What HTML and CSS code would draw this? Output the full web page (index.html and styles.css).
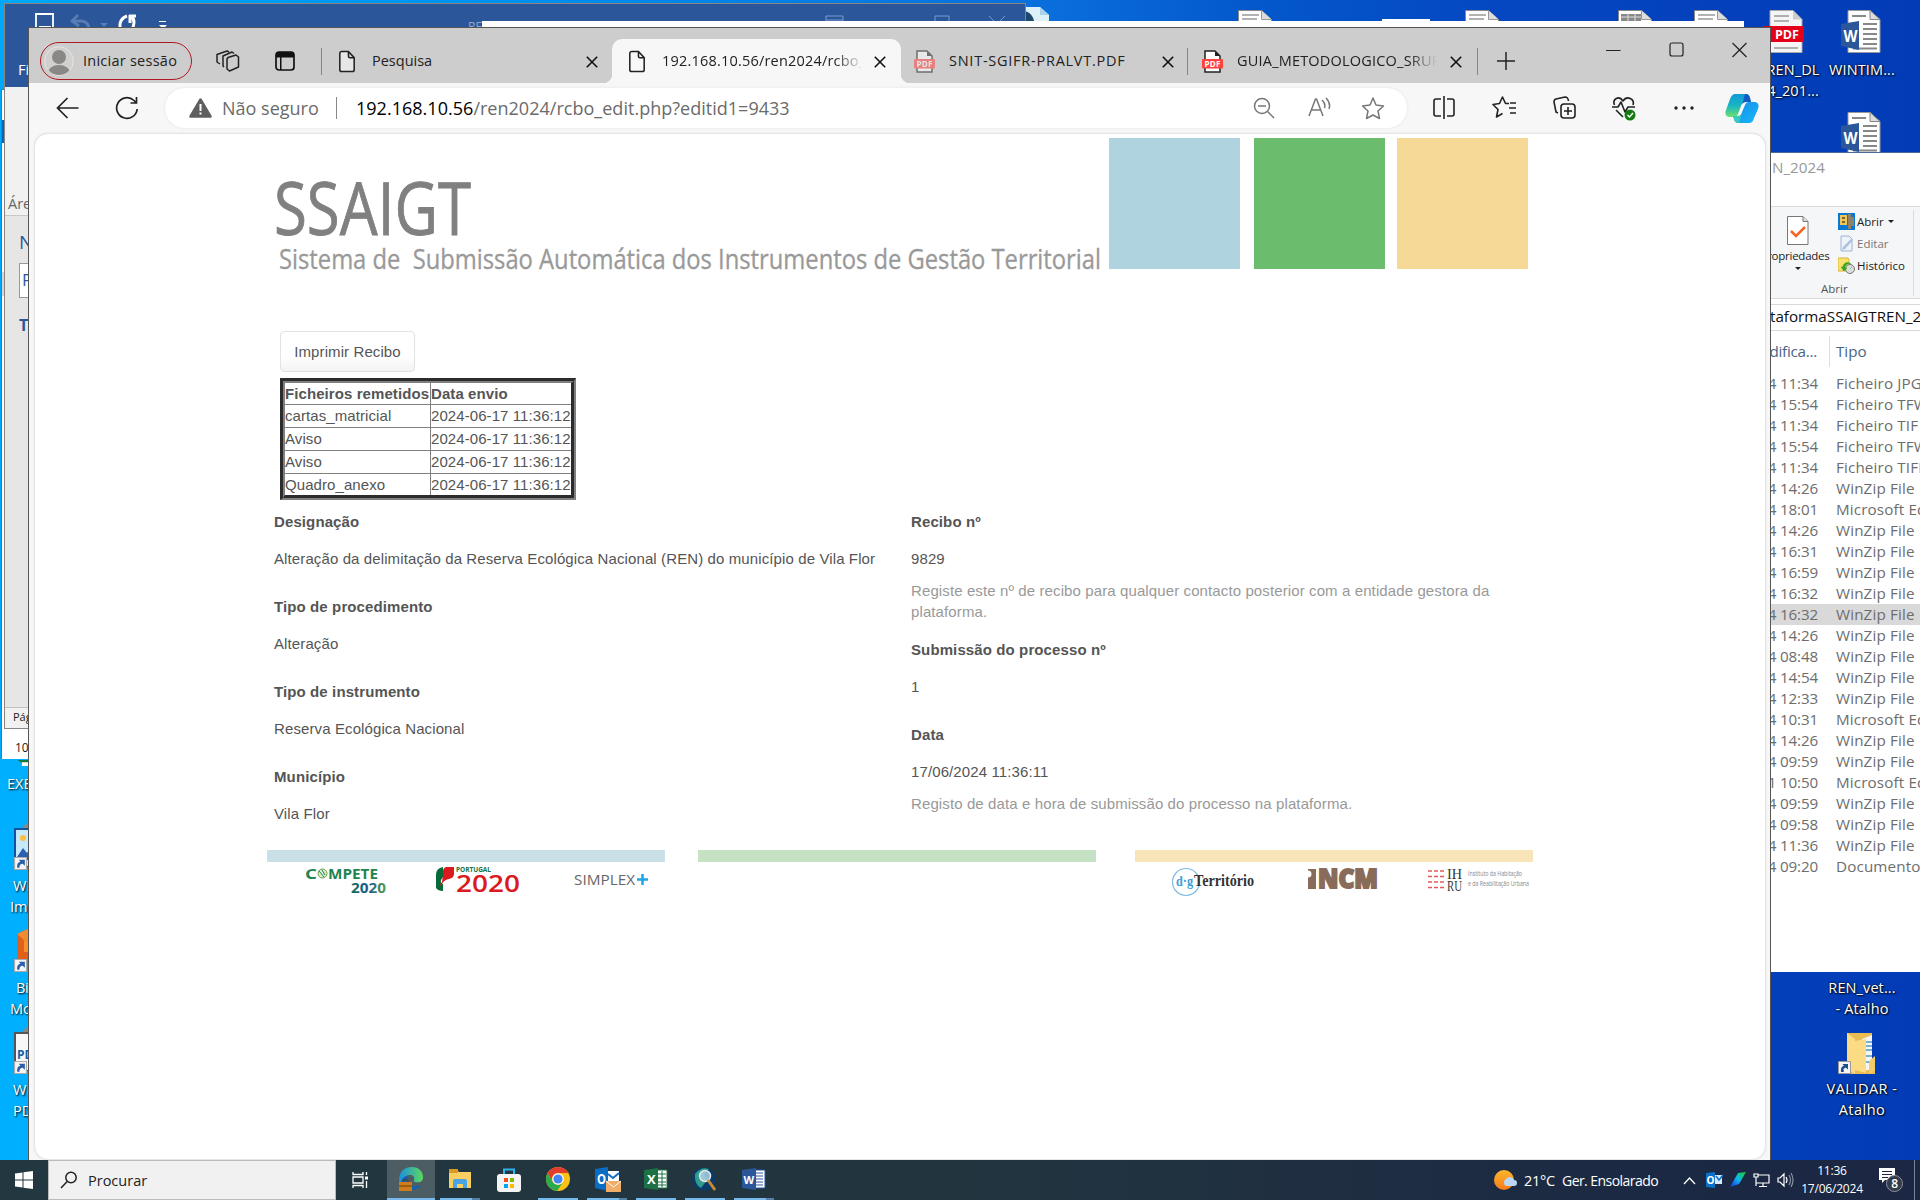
FILE: index.html
```html
<!DOCTYPE html>
<html lang="pt">
<head>
<meta charset="utf-8">
<title>SSAIGT</title>
<link rel="stylesheet" href="styles.css">
</head>
<body>
<svg width="0" height="0" class="defs">
  <symbol id="page" viewBox="0 0 18 24"><path d="M3 1.500h7.500l6 6.500v12.500a2 2 0 0 1-2 2H3.500a2 2 0 0 1-2-2V3.500a2 2 0 0 1 2-2zM10.500 1.800v4.700a1.500 1.500 0 0 0 1.500 1.500h4.500" fill="#f9f9f9" fill-opacity=".6" stroke="#222" stroke-width="1.600"/></symbol>
  <symbol id="close" viewBox="0 0 12 12"><path d="M.8.8l10.400 10.400M11.200.8L.8 11.200" stroke="#111" stroke-width="1.600" fill="none"/></symbol>
  <symbol id="pdf" viewBox="0 0 21 23"><path d="M3 1h10l5 5v16H3z" fill="#fff" stroke="#222" stroke-width="1.500"/><path d="M13 1v5h5z" fill="#222"/><rect y="9" width="21" height="9.500" rx="1" fill="#ff4240"/><text x="2.500" y="16.600" font-size="8" font-weight="700" textLength="16" fill="#fff">PDF</text></symbol>
  <symbol id="worddoc" viewBox="0 0 40 43"><path d="M7 .5h22l10 9v33H7z" fill="#fff" stroke="#999"/><path d="M29 .5v9h10z" fill="#ddd" stroke="#888"/><path d="M11 6h14M22 14h14M22 19h14M22 24h14M22 29h14M22 34h14M12 38.500h24" stroke="#888" stroke-width="2"/><path d="M0 14l18-3v29L0 36z" fill="#2b579a"/><text x="2.500" y="31.500" font-size="16" font-weight="700" fill="#fff" textLength="14" lengthAdjust="spacingAndGlyphs">W</text></symbol>
  <symbol id="doctop" viewBox="0 0 34 11"><path d="M.5 14V.5h23l10 9V14" fill="#fff" stroke="#888"/><path d="M23.500.5v9h10" fill="#ddd" stroke="#999"/><path d="M4 5h17M4 9h15" stroke="#999" stroke-width="1.500"/></symbol>
  <symbol id="link" viewBox="0 0 12 12"><path d="M.5.5h11v11H.5z" fill="#f4f4f4" stroke="#aaa"/><path d="M3 10c-.5-4 1-5.500 3-5.500L4.500 2.500H10V8L8 6.300C6 6.500 5 7.500 5 10z" fill="#2a5fa8"/></symbol>
</svg>

<main class="desktop">
  <div class="topicons">
    <svg class="globe" viewBox="0 0 26 15"><path d="M0 1h16l9 8v6H0z" fill="#dff1f8"/><path d="M0 5c6 1 9 5 10 10H0z" fill="#1b4a6c"/><path d="M16 1v8h9z" fill="#a9d2e8"/></svg>
    <svg class="t1"><use href="#doctop"/></svg><i class="t2"></i>
    <svg class="t3"><use href="#doctop"/></svg>
    <svg class="t4" viewBox="0 0 34 11"><path d="M.5 14V.5h23l10 9V14" fill="#fff" stroke="#888"/><path d="M23.500.5v9h10" fill="#ddd" stroke="#999"/><path d="M3 4h20v7H3z" fill="#888"/><path d="M10 4v7M17 4v7M3 7h20" stroke="#ddd"/></svg>
    <svg class="t5"><use href="#doctop"/></svg>
  </div>

  <section class="backwin"><i class="bluestrip"></i><i class="graystrip"></i><span>105</span></section>

  <section class="word">
    <header>
      <svg width="120" height="24" viewBox="0 0 120 24"><path d="M2 1h17v17H2zM6 18v-4h10v4" fill="none" stroke="#fff" stroke-width="1.800"/><path d="M44 2l-6 6 7 5M39 8h9q7 1 7 9" fill="none" stroke="#577bb3" stroke-width="2.800"/><path d="M66 10h8l-4 4z" fill="#577bb3"/><path d="M89 20c-5-6-4-14 4-17M97 18c4-6 4-12 0-15M95 3h7M96 2v8" fill="none" stroke="#fff" stroke-width="3"/></svg>
      <span class="more"></span>
      <span class="doc">RE</span>
      <svg class="wc" width="182" height="14" viewBox="0 0 182 14"><path d="M1 14V1h17v13M1 5h17M9.500 14V8M7 10l2.500-2L12 10M110 14V1h14v13M164 1l12 12M180 1l-12 12" fill="none" stroke="#7d9bc9"/></svg>
    </header>
    <div class="ficheiro">Ficheiro</div>
    <div class="ribbon">Área</div>
    <div class="nav"><b class="n1">Nav</b><b class="n2">P</b><b class="n3">T</b></div>
    <footer>Página</footer>
  </section>
  <i class="sliver"></i>

  <div class="leftdesk">
    <svg class="exe" viewBox="0 0 30 8"><path d="M2 0h28v4H8z" fill="#14793a"/><path d="M8 3v5h22V3z" fill="#fff"/></svg>
    <p>EXE</p>
    <div class="shot"><svg viewBox="0 0 40 45"><path d="M8 7C10 1 16 0 22 0v8z" fill="#888"/><path d="M1 7h39v38H1z" fill="#c5e9fb" stroke="#15549c" stroke-width="2"/><circle cx="9" cy="16" r="3" fill="#f9c03c"/><path d="M3 35l6-9 4 5 5-7v14H3z" fill="#2b5fb0"/></svg><svg class="lk"><use href="#link"/></svg></div>
    <p><span class="w">Win</span><br>Ima</p>
    <div class="shot"><svg viewBox="0 0 40 45"><path d="M3 10L25 0v45L3 36z" fill="#e0601b"/><path d="M3 10l22-10v10l-14 7z" fill="#f08b31"/><path d="M10 17l15-7v18H10z" fill="#f6902c"/></svg><svg class="lk"><use href="#link"/></svg></div>
    <p><span class="bz">Biz</span><br>Mod</p>
    <div class="shot"><svg viewBox="0 0 40 45"><path d="M8 7C10 1 16 0 22 0v8z" fill="#888"/><path d="M1 7h39v38H1z" fill="#f7f7f7" stroke="#555" stroke-width="2"/><text x="3" y="33" font-size="12" font-weight="700" fill="#155fa8">PDF</text></svg><svg class="lk"><use href="#link"/></svg></div>
    <p><span class="w">Win</span><br><span class="w">PDF</span></p>
  </div>

  <div class="rightdesk">
    <div class="dicon d1"><svg width="42" height="43" viewBox="0 0 42 43"><path d="M7 .5h23l9 9v33H7z" fill="#f5f5f5" stroke="#aaa"/><path d="M30 .5v9h9z" fill="#ccc"/><path d="M11 6h15M11 11h15M11 38h24" stroke="#999" stroke-width="1.500"/><path d="M0 16h41v16H0z" fill="#e2001a"/><text x="12" y="29" font-size="12" font-weight="700" fill="#fff" textLength="24" lengthAdjust="spacingAndGlyphs">PDF</text></svg><p>REN_DL<br>4_201...</p></div>
    <div class="dicon d2"><svg width="40" height="43"><use href="#worddoc"/></svg><p>WINTIM...</p></div>
    <div class="dicon d3"><svg width="40" height="43"><use href="#worddoc"/></svg></div>
    <div class="dicon d4"><p>REN_vet...<br>- Atalho</p><svg width="40" height="43" viewBox="0 0 40 43"><path d="M9 1h25v28l3 2v11H9z" fill="#e9bd52"/><path d="M24 7l10-4v35H24z" fill="#f5f5f5"/><path d="M28 10h6M28 14h6M28 18h6M28 24h6M28 30h6" stroke="#4c9ac8" stroke-width="1.500"/><path d="M9 1l8 6v35L9 37zM17 9l11-2v34l-11-3z" fill="#fbdc85"/><path d="M31 29l6-5v14l-6 4z" fill="#f2ca68"/><g transform="translate(0 29)"><path d="M.5.500h12v12H.5z" fill="#f4f4f4" stroke="#999"/><path d="M3 11c-.5-4 1-6 3-6L4.500 3H10v5.500L8 6.800C6 7 5 8 6 11z" fill="#1d4f91"/></g></svg><p class="val">VALIDAR -<br>Atalho</p></div>
  </div>

  <section class="explorer">
    <div class="etitle">N_2024</div>
    <div class="eribbon">
      <div class="props"><svg width="22" height="30" viewBox="0 0 22 30"><path d="M.5.5H16l5 5v23H.500z" fill="#fff" stroke="#777"/><path d="M16 .5v5h5" fill="#ddd" stroke="#777"/><path d="M4 15l5 5 9-9" fill="none" stroke="#f26522" stroke-width="2.500"/></svg><span>Propriedades</span><i class="caret"></i></div>
      <div class="acts">
        <div><svg width="17" height="17" viewBox="0 0 17 17"><path d="M0 0h17v17H0z" fill="#0878d4"/><path d="M2 2h7v10H2z" fill="#f3c55a"/><path d="M10 1h3v15h-3zM13 4h3v9h-3z" fill="#8e8268"/><path d="M4 4h3v2H4zM4 8h3v2H4z" fill="#7d642c"/></svg><span>Abrir</span><i class="caret"></i></div>
        <div class="dis"><svg width="17" height="17" viewBox="0 0 17 17"><path d="M3 1h8l3 3v12H3z" fill="#eef3fa" stroke="#9eb4d2"/><path d="M15 5l-8 9-3 1 1-3 8-8z" fill="#a9c0e0"/></svg><span>Editar</span></div>
        <div><svg width="17" height="17" viewBox="0 0 17 17"><path d="M0 1h10l1 2v11H0z" fill="#fbe26d" stroke="#d7b63c"/><circle cx="12" cy="12" r="4.500" fill="#ddd" stroke="#777"/><path d="M12 12l2-2M3 10l3 4 3-3H7c0-4 4-5 6-4-3-3-8-1-8 3z" fill="#35a822" stroke="#35a822" stroke-width=".5"/></svg><span>Histórico</span></div>
      </div>
      <em>Abrir</em>
    </div>
    <div class="epath">taformaSSAIGTREN_2024</div>
    <div class="ehead"><span class="c1">Data modifica...</span><span class="c2">Tipo</span></div>
    <div class="rows">
      <div><b>4 11:34</b><span>Ficheiro JPG</span></div>
      <div><b>4 15:54</b><span>Ficheiro TFW</span></div>
      <div><b>4 11:34</b><span>Ficheiro TIF</span></div>
      <div><b>4 15:54</b><span>Ficheiro TFW</span></div>
      <div><b>4 11:34</b><span>Ficheiro TIFF</span></div>
      <div><b>4 14:26</b><span>WinZip File</span></div>
      <div><b>4 18:01</b><span>Microsoft Edge</span></div>
      <div><b>4 14:26</b><span>WinZip File</span></div>
      <div><b>4 16:31</b><span>WinZip File</span></div>
      <div><b>4 16:59</b><span>WinZip File</span></div>
      <div><b>4 16:32</b><span>WinZip File</span></div>
      <div class="sel"><b>4 16:32</b><span>WinZip File</span></div>
      <div><b>4 14:26</b><span>WinZip File</span></div>
      <div><b>4 08:48</b><span>WinZip File</span></div>
      <div><b>4 14:54</b><span>WinZip File</span></div>
      <div><b>4 12:33</b><span>WinZip File</span></div>
      <div><b>4 10:31</b><span>Microsoft Edge</span></div>
      <div><b>4 14:26</b><span>WinZip File</span></div>
      <div><b>4 09:59</b><span>WinZip File</span></div>
      <div><b>1 10:50</b><span>Microsoft Edge</span></div>
      <div><b>4 09:59</b><span>WinZip File</span></div>
      <div><b>4 09:58</b><span>WinZip File</span></div>
      <div><b>4 11:36</b><span>WinZip File</span></div>
      <div><b>4 09:20</b><span>Documento</span></div>
    </div>
  </section>

  <section class="edge">
    <div class="tabbar">
      <div class="pill"><svg width="30" height="30" viewBox="0 0 30 30"><defs><clipPath id="av"><circle cx="15" cy="15" r="14"/></clipPath></defs><circle cx="15" cy="15" r="14.300" fill="#d2d0ce" stroke="#e6e4e2"/><g clip-path="url(#av)" fill="#8a8886"><circle cx="15" cy="11" r="7"/><ellipse cx="15" cy="27" rx="11" ry="8"/></g></svg><span>Iniciar sessão</span></div>
      <svg class="ws" width="24" height="22" viewBox="0 0 24 22"><g fill="none" stroke="#222" stroke-width="1.500" stroke-linejoin="round"><path d="M12 7.500l8-2.500 2.500 2v10l-9 4-2.500-2V9z"/><path d="M8 17l-1-1V6l9-4 2 1.500"/><path d="M4 14l-3-2V4.500L11 1l2 1"/></g></svg>
      <svg class="ta" width="20" height="20" viewBox="0 0 20 20"><rect x="1" y="1" width="18" height="18" rx="3" fill="none" stroke="#111" stroke-width="1.700"/><path d="M1 6.500V4a3 3 0 0 1 3-3h12a3 3 0 0 1 3 3v2.500zM5 6h1.500v13H5z" fill="#111"/></svg>
      <i class="sep"></i>
      <div class="tab tab1"><svg class="pg"><use href="#page"/></svg><span>Pesquisa</span><svg class="x"><use href="#close"/></svg></div>
      <div class="tab active"><svg class="pg"><use href="#page"/></svg><span class="fade">192.168.10.56/ren2024/rcbo_edit</span><svg class="x"><use href="#close"/></svg></div>
      <div class="tab tab3"><svg class="pf dim"><use href="#pdf"/></svg><span>SNIT-SGIFR-PRALVT.PDF</span><svg class="x"><use href="#close"/></svg></div>
      <i class="sep"></i>
      <div class="tab tab4"><svg class="pf"><use href="#pdf"/></svg><span class="fade">GUIA_METODOLOGICO_SRUP</span><svg class="x"><use href="#close"/></svg></div>
      <i class="sep"></i>
      <svg class="plus" width="20" height="20"><path d="M10 1v18M1 10h18" stroke="#222" stroke-width="1.500"/></svg>
      <svg class="wctl" width="142" height="16" viewBox="0 0 142 16"><path d="M0 8.500h14.500" stroke="#222"/><rect x="64" y="1" width="13" height="13" rx="2" fill="none" stroke="#222" stroke-width="1.200"/><path d="M126.500 1l14 14M140.500 1l-14 14" stroke="#222" stroke-width="1.200"/></svg>
    </div>
    <div class="toolbar">
      <svg class="back" width="24" height="22" viewBox="0 0 24 22"><path d="M22.500 11H2M11.500 1L1.500 11l10 10" fill="none" stroke="#222" stroke-width="1.700"/></svg>
      <svg class="reload" width="24" height="24" viewBox="0 0 24 24"><path d="M22.200 13A10.300 10.300 0 1 1 19 4.500l2 2M21.500 1v6h-6" fill="none" stroke="#222" stroke-width="1.700"/></svg>
      <div class="address">
        <svg class="warn" width="23" height="20" viewBox="0 0 23 20"><path d="M11.500 1.500L21.500 18.500h-20z" fill="#5f5f5f" stroke="#5f5f5f" stroke-width="2.500" stroke-linejoin="round"/><path d="M11.500 6v7M11.500 14.500v2" stroke="#fff" stroke-width="2"/></svg>
        <span class="ns">Não seguro</span><i></i>
        <span class="url"><b>192.168.10.56</b>/ren2024/rcbo_edit.php?editid1=9433</span>
        <svg class="az" width="132" height="24" viewBox="0 0 132 24"><g fill="none" stroke="#777" stroke-width="1.500"><circle cx="9" cy="10" r="7.500"/><path d="M5 10h8M14.500 15.500L21 22M56 20l6.500-17h1L70 20M58.500 14h9M69 4q4 4 2.500 8M73 2q5 5 3 11M120 2l3 7 7.500 1-5.500 5 1.500 7.500L120 19l-6.500 3.500L115 15l-5.500-5 7.500-1z" stroke-linejoin="round"/></g></svg>
      </div>
      <svg class="tools" width="270" height="26" viewBox="0 0 270 26"><g fill="none" stroke="#222" stroke-width="1.600" stroke-linejoin="round"><path d="M9 4H4a2 2 0 0 0-2 2v13a2 2 0 0 0 2 2h5M15 4h5a2 2 0 0 1 2 2v13a2 2 0 0 1-2 2h-5M12 1v23"/><path d="M78 8h6M77 13h7M78 18h6M77 8.500h-3.500L70.500 2l-3 6.500-6.500 1 5 5L64.500 22l6-3.500"/><rect x="129" y="9" width="14" height="14" rx="3"/><path d="M136 12v8M132 16h8M126 18l-2-1-2-10a3 3 0 0 1 2-3l9-2q3 0 3.500 4"/><path d="M182.500 10C180 4 187 0 191 6c4-6 12-2 10 4M180 12h6l3-5 4 10 3-5h7M184 15l7 7"/></g><circle cx="198" cy="20" r="5.500" fill="#107c10"/><path d="M195.500 20l2 2 3.500-4" fill="none" stroke="#fff" stroke-width="1.500"/><g fill="#222"><circle cx="244" cy="13" r="1.700"/><circle cx="252" cy="13" r="1.700"/><circle cx="260" cy="13" r="1.700"/></g></svg>
      <svg class="copilot" width="34" height="30" viewBox="0 0 34 30"><defs><linearGradient id="ca" x2="0" y2="1"><stop stop-color="#129ad6"/><stop offset=".5" stop-color="#18b5c4"/><stop offset="1" stop-color="#70df6d"/></linearGradient><linearGradient id="cb" x2="1" y2="1"><stop stop-color="#168ae8"/><stop offset="1" stop-color="#18b9fa"/></linearGradient></defs><path d="M10 1h11q3 0 4 4l1 4h-5q-4 0-5 4l-3 8q-1 3-4 3H4q-5-1-3-7L5 6q2-5 5-5z" fill="url(#ca)"/><path d="M20 1h1q3 0 4 4l1 4h-5q-3 0-4 3z" fill="#155bc4"/><path d="M24 30H13q-3 0-4-4l-1-3h5q3 0 4-4l3-7q1-3 4-3h6q5 1 3 7l-4 9q-1 5-5 5z" fill="url(#cb)"/><path d="M14 30h-1q-3 0-4-4l-1-3h5q3 0 4-3z" fill="#39c9bd"/></svg>
    </div>

    <article class="page">
      <header class="site">
        <svg class="brand" width="834" height="134" viewBox="0 0 834 134"><text x="-2" y="97" font-size="74" textLength="197" lengthAdjust="spacingAndGlyphs" fill="#808080" stroke="#808080" stroke-width=".9">SSAIGT</text><text x="3" y="131" font-size="26.500" textLength="822" lengthAdjust="spacingAndGlyphs" fill="#999" stroke="#999" stroke-width=".3" xml:space="preserve">Sistema de  Submissão Automática dos Instrumentos de Gestão Territorial</text></svg>
        <i class="sq blue"></i><i class="sq green"></i><i class="sq gold"></i>
      </header>
      <button class="print">Imprimir Recibo</button>
      <div class="tablebox"><table>
        <tr><th>Ficheiros remetidos</th><th>Data envio</th></tr>
        <tr><td>cartas_matricial</td><td>2024-06-17 11:36:12</td></tr>
        <tr><td>Aviso</td><td>2024-06-17 11:36:12</td></tr>
        <tr><td>Aviso</td><td>2024-06-17 11:36:12</td></tr>
        <tr><td>Quadro_anexo</td><td>2024-06-17 11:36:12</td></tr>
      </table></div>
      <div class="fields">
        <dl>
          <dt>Designação</dt><dd>Alteração da delimitação da Reserva Ecológica Nacional (REN) do município de Vila Flor</dd>
          <dt>Tipo de procedimento</dt><dd>Alteração</dd>
          <dt>Tipo de instrumento</dt><dd>Reserva Ecológica Nacional</dd>
          <dt>Município</dt><dd>Vila Flor</dd>
        </dl>
        <dl>
          <dt>Recibo nº</dt><dd class="h">9829</dd>
          <dd class="help two">Registe este nº de recibo para qualquer contacto posterior com a entidade gestora da<br>plataforma.</dd>
          <dt>Submissão do processo nº</dt><dd>1</dd>
          <dt>Data</dt><dd class="h">17/06/2024 11:36:11</dd>
          <dd class="help">Registo de data e hora de submissão do processo na plataforma.</dd>
        </dl>
      </div>
      <footer class="logos">
        <div class="blue"><svg width="398" height="50" viewBox="0 0 398 50"><g font-weight="700"><text x="38" y="18" font-size="14.500" textLength="12" lengthAdjust="spacingAndGlyphs" fill="#1f8450">C</text><text x="61" y="18" font-size="14.500" textLength="50" lengthAdjust="spacingAndGlyphs" fill="#1f8450">MPETE</text><circle cx="55.500" cy="12.500" r="4.500" fill="#dcebcf" stroke="#67a23f"/><path d="M52 10l5 6M55 9l3 5" stroke="#1f8450"/><text x="84" y="31.500" font-size="14.500" textLength="35" lengthAdjust="spacingAndGlyphs" fill="url(#cg)">2020</text></g><defs><linearGradient id="cg"><stop stop-color="#126e5c"/><stop offset=".5" stop-color="#1b5a91"/><stop offset="1" stop-color="#54a04c"/></linearGradient></defs>
          <path d="M176 6q-7 1-7 8v13q2 3 7 3v-7q-3-1-2-4l2-3z" fill="#046a38"/><path d="M187 6h-8q-4 1-3 8l-1 7q-3 3-1 4 2-6 8-7 5-1 5-5z" fill="#da1a1f"/><text x="189" y="10.500" font-size="7" font-weight="700" textLength="35" lengthAdjust="spacingAndGlyphs" fill="#16733f">PORTUGAL</text><text x="189" y="31" font-size="23" font-weight="600" textLength="64" lengthAdjust="spacingAndGlyphs" fill="#da1a1f">2020</text>
          <text x="307" y="23.500" font-size="15" textLength="61" lengthAdjust="spacingAndGlyphs" fill="#666">SIMPLEX</text><path d="M370 18.500h11M375.500 13v11" stroke="#1ea5e5" stroke-width="2.500"/></svg></div>
        <div class="green"></div>
        <div class="gold"><svg width="398" height="50" viewBox="0 0 398 50"><circle cx="51" cy="21" r="13.500" fill="#fff" stroke="#7dbbe0" stroke-width="1.200"/><text class="serif" x="41" y="25" font-size="15" font-weight="700" textLength="17" lengthAdjust="spacingAndGlyphs" fill="#3a9fd5">d·g</text><text class="serif" x="59" y="25" font-size="16" font-weight="700" textLength="60" lengthAdjust="spacingAndGlyphs" fill="#333">Território</text>
          <path d="M173 8h8v20h-8v-11.500q3.500 0 3.500-3.500t-3.500-3.500z" fill="#896b5a"/><text x="183" y="27" font-size="26" font-weight="800" textLength="60" lengthAdjust="spacingAndGlyphs" fill="#896b5a" stroke="#896b5a" stroke-width="1.800">NCM</text>
          <path d="M293 10h16M293 15.500h16M293 21h16M293 26.500h16" stroke="#e45a56" stroke-width="1.500" stroke-dasharray="4 2"/><g class="serif"><text x="312" y="18" font-size="14" textLength="15" lengthAdjust="spacingAndGlyphs" fill="#333">IH</text><text x="312" y="29.500" font-size="14" textLength="15" lengthAdjust="spacingAndGlyphs" fill="#333">RU</text></g><text x="333" y="15" font-size="7.500" textLength="54" lengthAdjust="spacingAndGlyphs" fill="#888">Instituto da Habitação</text><text x="333" y="25" font-size="7.500" textLength="61" lengthAdjust="spacingAndGlyphs" fill="#888">e da Reabilitação Urbana</text></svg></div>
      </footer>
    </article>
  </section>
</main>

<nav class="taskbar">
  <div class="start"><svg width="18" height="18" viewBox="0 0 18 18"><path d="M0 2.500L7.500 1.500v7H0zM8.500 1.300L18 0v8.500H8.500zM0 9.500h7.500v7L0 15.500zM8.500 9.500H18V18l-9.500-1.300z" fill="#fff"/></svg></div>
  <div class="search"><svg width="18" height="18" viewBox="0 0 18 18"><circle cx="11" cy="6.500" r="5.200" fill="none" stroke="#222" stroke-width="1.500"/><path d="M7.200 10.500L1 17" stroke="#222" stroke-width="1.500"/></svg><span>Procurar</span></div>
  <div class="tv"><svg width="17" height="16" viewBox="0 0 17 16"><path d="M1 0v2.500h10V0M1 16v-2.500h10V16M1 5h10v6H1zM14.500 0v3M14.500 9v7" fill="none" stroke="#fff" stroke-width="1.300"/><path d="M13 4.500h3v3h-3z" fill="#fff"/></svg></div>
  <div class="app on"><svg width="26" height="26" viewBox="0 0 26 26"><defs><linearGradient id="eg"><stop stop-color="#1b8fe0"/><stop offset="1" stop-color="#5cd95d"/></linearGradient></defs><path d="M1 14C1 5 7 1 14 1s11 5 11 10-4 6-8 5c-1 0-2-1-1-2 1-3-1-5-4-5-5 0-6 3-6 7 0 4 4 8 9 8C6 25 1 21 1 14z" fill="url(#eg)"/><path d="M10 10c-3 8 3 13 13 9-4 6-15 7-19 1-2-6 1-10 6-10z" fill="#0d62b5"/><path d="M1 16h13v9H1z" fill="#cf7d1b"/><path d="M5 16v-2h5v2M1 20h13" stroke="#6a3d0b" fill="none"/></svg><i></i></div>
  <div class="app multi"><svg width="24" height="22" viewBox="0 0 24 22"><path d="M1 2h8l2 2h12v16H1z" fill="#f8cf60"/><path d="M1 1h9v4H1z" fill="#d99b23"/><path d="M5 20v-7q0-2 2-2h10q2 0 2 2v7h-4v-4H9v4z" fill="#4aa3e3"/></svg><i></i></div>
  <div class="app none"><svg width="24" height="25" viewBox="0 0 24 25"><path d="M7 7V1.500h10V7" fill="none" stroke="#2db4f0" stroke-width="2"/><rect y="6" width="24" height="18" rx="3" fill="#f4f4f4"/><path d="M7 10h4v4H7z" fill="#f25022"/><path d="M13 10h4v4h-4z" fill="#7fba00"/><path d="M7 16h4v4H7z" fill="#00a4ef"/><path d="M13 16h4v4h-4z" fill="#ffb900"/></svg></div>
  <div class="app"><svg width="26" height="26" viewBox="0 0 26 26"><circle cx="13" cy="13" r="12" fill="#fbc116"/><path d="M2.600 7A12 12 0 0 1 23.400 7H13a6 6 0 0 0-5.200 9z" fill="#e33b2e"/><path d="M2.600 7A12 12 0 0 0 12 25l6-9a6 6 0 0 1-10.200 0z" fill="#2da94f"/><circle cx="13" cy="13" r="5.800" fill="#fff"/><circle cx="13" cy="13" r="4.600" fill="#4285f4"/></svg><i></i></div>
  <div class="app multi ol"><svg width="28" height="26" viewBox="0 0 28 26"><path d="M12 5h12v11H12z" fill="#fff"/><path d="M13 8l5 4 6-5" fill="none" stroke="#0f6fc5" stroke-width="2"/><path d="M0 3l13-2v24L0 22z" fill="#0a6cc4"/><text x="2" y="18" font-size="14" font-weight="700" fill="#fff" textLength="9" lengthAdjust="spacingAndGlyphs">O</text><path d="M11 15h15v11H11z" fill="#f0ad68"/><path d="M11 15l7.500 6 7.500-6" fill="none" stroke="#fff"/></svg><i></i></div>
  <div class="app"><svg width="24" height="24" viewBox="0 0 24 24"><path d="M12 3h11v18H12z" fill="#fff" stroke="#1d7145"/><path d="M13 7h9M13 11h9M13 15h9M13 18h9M18 4v16" stroke="#1d7145"/><path d="M0 3l14-2v22L0 21z" fill="#1d7145"/><text x="3" y="17" font-size="13" font-weight="700" fill="#fff">X</text></svg><i></i></div>
  <div class="app"><svg width="26" height="26" viewBox="0 0 26 26"><circle cx="12" cy="13" r="11.500" fill="#0a3b6b"/><path d="M3 8q6-8 14-5l-5 5 3 6-6 8Q2 18 3 8z" fill="#2d9c8d"/><circle cx="13" cy="10" r="5.500" fill="#a8d4e5" fill-opacity=".85" stroke="#e5e5e5" stroke-width="1.500"/><path d="M16 14l7 10" stroke="#c78a35" stroke-width="3"/></svg><i></i></div>
  <div class="app multi"><svg width="24" height="24" viewBox="0 0 24 24"><path d="M12 3h11v18H12z" fill="#fff" stroke="#2b579a"/><path d="M14 6h7M14 9h7M14 12h7M14 15h7M14 18h7" stroke="#2b579a"/><path d="M0 3l14-2v22L0 21z" fill="#2b579a"/><text x="1.500" y="16.500" font-size="11" font-weight="700" fill="#fff">W</text></svg><i></i></div>
  <div class="tray">
    <svg class="sun" width="24" height="22" viewBox="0 0 24 22"><defs><linearGradient id="sg" x2="0" y2="1"><stop stop-color="#fcb72c"/><stop offset="1" stop-color="#f57a1a"/></linearGradient></defs><circle cx="11" cy="11" r="10" fill="url(#sg)"/><path d="M13 17a4 4 0 0 1 0-7 4.500 4.500 0 0 1 8 1 3 3 0 0 1 0 6z" fill="#bcd6f5"/></svg>
    <span class="tmp">21°C</span><span class="wea">Ger. Ensolarado</span>
    <svg class="ti" width="112" height="20" viewBox="0 0 112 20"><path d="M1 14l5.500-6 5.500 6" fill="none" stroke="#fff" stroke-width="1.300"/><path d="M23 3l9-1v16l-9-1z" fill="#0a6fc9"/><path d="M32 5h7v9h-7z" fill="#d5eafc"/><path d="M33 6l3 4 4-5" stroke="#0a6fc9" stroke-width="1.500" fill="none"/><text x="23.500" y="14" font-size="10" font-weight="700" fill="#fff">O</text><path d="M55 3l8-1-7 12-9 3z" fill="url(#pg)"/><defs><linearGradient id="pg" x1="0" y1="1" x2="1" y2="0"><stop stop-color="#1329e8"/><stop offset=".5" stop-color="#10b4ef"/><stop offset="1" stop-color="#15d21b"/></linearGradient></defs><g fill="none" stroke="#fff" stroke-width="1.200"><path d="M75 5h11v8H73M71 4h4v3h-4zM73 7v9M80 13v3M76 16.500h8M95 8h2l4-4v12l-4-4h-2z"/><path d="M103 7q2 3 0 6"/><path d="M106 5q3 5 0 10M108 3q4 7 0 14" stroke="#8791a3"/></g></svg>
    <div class="clock">11:36<br>17/06/2024</div>
    <svg class="nt" width="26" height="26" viewBox="0 0 26 26"><path d="M0 1h16v12H6l-3 3v-3H0z" fill="#fff"/><path d="M3 4.500h10M3 7.500h10M3 10.500h6" stroke="#1b2845"/><circle cx="15.500" cy="16.500" r="8" fill="#333b48" stroke="#8b919c"/><text x="12.300" y="21" font-size="12" font-weight="600" fill="#fff">8</text></svg>
    <i class="show"></i>
  </div>
</nav>
</body>
</html>
```
FILE: styles.css
```css
* { box-sizing: border-box; }
body { margin: 0; width: 1920px; height: 1200px; overflow: hidden; font-family: "Open Sans", "Noto Sans", sans-serif; font-size: 14.5px; color: #222; }
.defs { position: absolute; }
p, dl, dd { margin: 0; }
svg { display: block; flex: none; }
.desktop { position: relative; height: 1160px; overflow: hidden; background: linear-gradient(90deg, #00a8fb 0, #0091ee 500px, #0a70dd 1030px, #0458cc 1250px, #0447c1 1500px, #033bb6 1920px); }

/* desktop shortcuts */
.topicons svg, .topicons i { position: absolute; top: 10px; width: 34px; height: 11px; }
.topicons .globe { left: 1024px; top: 6px; width: 26px; height: 15px; }
.topicons .t1 { left: 1238px; }
.topicons .t2 { left: 1382px; top: 19px; width: 48px; height: 2px; background: #fff; }
.topicons .t3 { left: 1465px; }
.topicons .t4 { left: 1618px; }
.topicons .t5 { left: 1694px; }
.leftdesk { position: absolute; left: 0; top: 759px; width: 30px; height: 401px; overflow: hidden; background: #00affe; }
.leftdesk p { color: #fff; white-space: nowrap; line-height: 21px; width: 72px; text-shadow: 1px 1px 2px #000; padding-left: 10px; }
.leftdesk .w { padding-left: 3px; }
.leftdesk .bz { padding-left: 6px; letter-spacing: -.3px; }
.leftdesk .exe { width: 22px; height: 8px; margin-left: 16px; }
.leftdesk .exe + p { margin: 6px 0 28px; padding-left: 7px; }
.shot { height: 48px; position: relative; padding-left: 14px; }
.shot svg { width: 40px; height: 45px; }
.shot .lk { position: absolute; left: 14px; bottom: 0; width: 13px; height: 13px; }
.shot + p { margin: 5px 0 7px; height: 42px; }
.dicon { position: absolute; }
.dicon p { color: #fff; text-align: center; line-height: 21px; white-space: nowrap; letter-spacing: .1px; text-shadow: 1px 1px 2px #000, 0 0 2px #000; }
.d1 { left: 1763px; top: 10px; width: 60px; }
.d1 p { margin-top: 6px; }
.d2 { left: 1822px; top: 10px; width: 80px; }
.d2 svg, .d3 svg { margin-left: 19px; }
.d2 p { margin-top: 6px; }
.d3 { left: 1822px; top: 112px; }
.d4 { left: 1822px; top: 977px; width: 80px; }
.d4 svg { margin: 13px 0 3px 16px; }
.d4 .val { letter-spacing: .5px; }

/* windows behind the browser */
.backwin { position: absolute; left: 1px; top: 89px; width: 40px; height: 671px; background: #fff; border: 1px solid #2b83ab; }
.bluestrip { display: block; height: 23px; margin-top: 30px; background: #0368b4; }
.graystrip { display: block; height: 24px; margin-top: 129px; background: #d5d5d5; }
.backwin span { display: block; margin: 443px 0 0 13px; font-size: 12px; }
.word { position: absolute; left: 4px; top: 3px; width: 1022px; height: 726px; background: #e6e6e6; border: 1px solid #8a8580; display: flex; flex-direction: column; }
.word header { display: flex; height: 52px; background: #2b579a; padding: 9px 0 0 29px; color: #8fa8d0; }
.word .more { margin-left: 5px; width: 7px; height: 9px; margin-top: 8px; border-top: 1px solid #fff; }
.word .more::after { content: ""; display: block; margin-top: 3px; border: 4px solid transparent; border-top-color: #fff; }
.word .doc { margin: 5px 0 0 302px; font-size: 12px; }
.word .wc { margin: 2px 0 0 343px; }
.ficheiro { height: 31px; padding-left: 13px; background: #2b579a; color: #fff; line-height: 27px; font-size: 14.500px; }
.ribbon { height: 129px; background: #f1f1f1; border-bottom: 1px solid #c8c8c8; padding: 108px 0 0 3px; line-height: 17px; color: #666; }
.nav { flex: 1; display: flex; flex-direction: column; padding-left: 14px; color: #2b579a; }
.nav b { font-weight: 400; font-size: 19px; }
.nav .n1 { margin-top: 13px; line-height: 26px; }
.nav .n2 { margin-top: 8px; height: 35px; background: #fff; border: 1px solid #999; padding: 4px 2px; font-size: 17px; }
.nav .n3 { margin-top: 16px; font-weight: 700; font-size: 16px; }
.word footer { height: 21px; background: #f1f1f1; border-top: 1px solid #c0c0c0; font-size: 11px; padding: 1px 0 0 8px; }
.sliver { position: absolute; left: 482px; top: 21px; width: 1262px; height: 7px; background: #fff; }

/* file explorer */
.explorer { position: absolute; left: 1770px; top: 152px; width: 150px; height: 820px; background: #fff; overflow: hidden; white-space: nowrap; color: #6d6d6d; border-top: 1px solid #4a6a9c; font-size: 15.200px; }
.etitle { height: 53px; padding: 4px 0 0 2px; color: #999; line-height: 20px; }
.eribbon { display: grid; grid-template-columns: 64px 1fr; height: 93px; background: #f5f6f7; border: solid #dadbdc; border-width: 1px 0; font-size: 11.500px; color: #222; position: relative; }
.eribbon::after { content: ""; position: absolute; left: 143px; top: 3px; width: 1px; height: 86px; background: #dadbdc; }
.props { display: flex; flex-direction: column; align-items: center; padding-top: 9px; width: 60px; margin-left: -2px; }
.props span { margin-top: 2px; margin-left: -6px; letter-spacing: -.25px; }
.caret { border: 3.500px solid transparent; border-top-color: #222; height: 4px; margin-top: 4px; }
.acts { padding: 3px 0 0 4px; }
.acts div { display: flex; height: 22px; align-items: center; gap: 2px; }
.acts .caret { margin-left: 2px; }
.acts .dis { color: #777; }
.eribbon em { position: absolute; left: 51px; top: 74px; font-style: normal; color: #555; }
.epath { margin-top: 5px; height: 27px; border: solid #d9d9d9; border-width: 1px 0; color: #111; line-height: 23px; }
.ehead { display: flex; height: 42px; padding-top: 5px; color: #4a6484; line-height: 31px; }
.ehead .c1 { width: 60px; display: flex; justify-content: flex-end; padding-right: 12px; height: 31px; border-right: 1px solid #ddd; letter-spacing: -.25px; }
.ehead .c2 { padding-left: 6px; }
.rows div { display: grid; grid-template-columns: 48px 1fr; column-gap: 18px; height: 21px; line-height: 21px; }
.rows span { letter-spacing: .15px; }
.rows b { font-weight: 400; display: flex; justify-content: flex-end; letter-spacing: -.15px; }
.rows .sel { background: #d9d9d9; }

/* browser chrome */
.edge { position: absolute; left: 28px; top: 27px; width: 1743px; height: 1133px; background: #f7f7f7; border: solid #555; border-width: 1px 1px 0; }
.tabbar { display: flex; height: 55px; background: #cdcdcd; align-items: flex-start; padding-left: 11px; white-space: nowrap; }
.pill { display: flex; align-items: center; gap: 9px; width: 152px; height: 38px; margin-top: 14px; padding-left: 3px; border: 1.500px solid #b01820; border-radius: 19px; letter-spacing: .25px; }
.pill span, .tab span { padding-bottom: 2px; }
.ws { margin: 22px 0 0 24px; }
.ta { margin: 23px 0 0 35px; }
.sep { width: 1px; height: 27px; background: #858585; margin-top: 20px; flex: none; }
.ta + .sep { margin-left: 26px; }
.tab { display: flex; align-items: center; height: 44px; margin-top: 11px; flex: none; }
.tab span { overflow: hidden; }
.pg { width: 18px; height: 23px; }
.pf { width: 21px; height: 23px; }
.dim { opacity: .55; }
.x { width: 12px; height: 12px; margin-left: auto; margin-top: 2px; }
.tab1 { width: 260px; margin-left: 16px; margin-right: 14px; }
.tab1 .pg { margin-right: 16px; }
.active { width: 289px; background: #f7f7f7; border-radius: 10px 10px 0 0; padding: 0 15px 0 16px; position: relative; }
.active::before, .active::after { content: ""; position: absolute; bottom: 0; width: 9px; height: 9px; }
.active::before { left: -9px; background: radial-gradient(circle at 0 0, transparent 9px, #f7f7f7 9.500px); }
.active::after { right: -9px; background: radial-gradient(circle at 100% 0, transparent 9px, #f7f7f7 9.500px); }
.active span { margin-left: 16px; width: 201px; letter-spacing: .2px; }
.fade { -webkit-mask-image: linear-gradient(90deg, #000 86%, transparent); mask-image: linear-gradient(90deg, #000 86%, transparent); }
.tab3 { width: 260px; margin: 11px 13px 0 13px; }
.tab3 span { letter-spacing: .75px; }
.tab3 .pf { margin-right: 14px; }
.tab4 { width: 260px; margin: 11px 15px 0 14px; }
.tab4 .pf { margin-right: 14px; }
.tab4 span { width: 200px; letter-spacing: .2px; }
.plus { margin: 23px 0 0 18px; }
.wctl { margin: 14px 0 0 90px; }
.toolbar { display: flex; align-items: center; height: 50px; padding-left: 27px; }
.reload { margin-left: 35px; }
.address { display: flex; align-items: center; width: 1242px; height: 40px; margin-left: 26px; background: #fff; border-radius: 20px; padding-left: 24px; font-size: 18px; color: #6b6b6b; box-shadow: 0 0 3px #e2e2e2; white-space: nowrap; }
.ns { margin-left: 10px; width: 98px; }
.address i { width: 1px; height: 22px; background: #888; margin: 0 19px 0 16px; }
.url b { font-weight: 400; color: #000; }
.url { width: 433px; letter-spacing: .02px; }
.az { margin-left: 464px; }
.tools { margin-left: 25px; }
.copilot { margin-left: 23px; }

/* receipt page */
.page { margin: 0 4px 0 5px; height: 1027px; background: #fff; border: 1px solid #e6e6e6; border-radius: 14px; padding: 4px 0 0 232px; font-family: "Liberation Sans", Arial, sans-serif; font-size: 15px; color: #555; box-shadow: 0 0 2px #ddd; }
.site { display: flex; gap: 13px; padding-left: 9px; height: 193px; font-family: "Open Sans", "Noto Sans", sans-serif; }
.brand { margin-right: -14px; overflow: visible; }
.sq { width: 131px; height: 131px; background: #afd3df; }
.sq.green { background: #6bbd6d; margin: 0 -1px 0 1px; }
.sq.gold { background: #f6d996; }
.print { display: block; width: 135px; height: 41px; margin-left: 13px; border: 1px solid #e2e2e2; border-radius: 4px; background: linear-gradient(#fff 60%, #f3f3f3); font: inherit; color: #555; white-space: nowrap; padding: 0; letter-spacing: .1px; }
.tablebox { width: 296px; height: 122px; margin: 6px 0 0 13px; border: solid #2c2c2c; border-width: 3px 2px 2px 3px; border-right-color: #808080; border-bottom-color: #808080; }
table { border-collapse: separate; border-spacing: 0; width: 291px; height: 117px; table-layout: fixed; border: solid #808080; border-width: 2px 3px 3px 2px; border-right-color: #2c2c2c; border-bottom-color: #2c2c2c; }
td, th { padding: 0 0 1px; text-align: left; line-height: 19px; height: 23px; border-bottom: 1px solid #808080; white-space: nowrap; letter-spacing: .08px; }
th:first-child, td:first-child { width: 146px; border-right: 1px solid #808080; }
th { height: 22px; }
tr:last-child td { border-bottom: 0; height: 21px; }
.fields { display: grid; grid-template-columns: 637px 1fr; padding-left: 7px; height: 350px; padding-top: 12px; letter-spacing: .11px; }
dt { font-weight: 700; line-height: 20px; margin-bottom: 17px; }
dd { line-height: 20px; margin-bottom: 28px; white-space: nowrap; }
dd.h { margin-bottom: 11px; }
dd.help { color: #999; line-height: 21px; }
dd.two { margin-bottom: 18px; }
.logos { display: grid; grid-template-columns: 431px 437px 398px; height: 60px; font-family: "Open Sans", sans-serif; }
.logos > div { border-top: 12px solid #cae0e8; height: 60px; width: 398px; }
.logos .green { border-color: #c5e3c4; }
.logos .gold { border-color: #f9e4b9; }
.logos svg { margin-top: -1px; }
.serif { font-family: "Liberation Serif", serif; }

/* taskbar */
.taskbar { display: flex; height: 40px; background: linear-gradient(90deg, #22373f 0, #22353f 50%, #1c2943 85%, #1b2743); color: #fff; align-items: stretch; }
.start { width: 48px; display: flex; align-items: center; justify-content: center; }
.search { width: 288px; background: #f1f1f1; border: 1px solid #bbb; display: flex; align-items: center; color: #222; gap: 10px; padding-left: 11px; }
.tv { width: 51px; padding: 12px 0 0 16px; }
.app { width: 48px; margin-right: 1px; display: flex; flex-direction: column; align-items: center; }
.app svg { margin: auto; }
.app.ol svg { position: relative; left: 2px; }
.app i { width: 40px; height: 2px; background: #76b9ed; }
.app.on { background: #4d5d64; }
.app.on i { width: 48px; }
.app.multi i { background: linear-gradient(90deg, #76b9ed 80%, #5580a3 80%); }
.tray { display: flex; flex: 1; align-items: center; padding-left: 714px; white-space: nowrap; }
.tmp { margin-left: 7px; width: 28px; letter-spacing: -.3px; }
.wea { margin-left: 10px; width: 97px; font-size: 14px; letter-spacing: -.55px; }
.ti { margin-left: 24px; }
.clock { width: 84px; text-align: center; font-size: 12px; line-height: 18px; margin-left: -5px; letter-spacing: -.2px; }
.nt { margin-left: 5px; }
.show { width: 1px; height: 40px; margin-left: 9px; background: #7b8494; }
```
